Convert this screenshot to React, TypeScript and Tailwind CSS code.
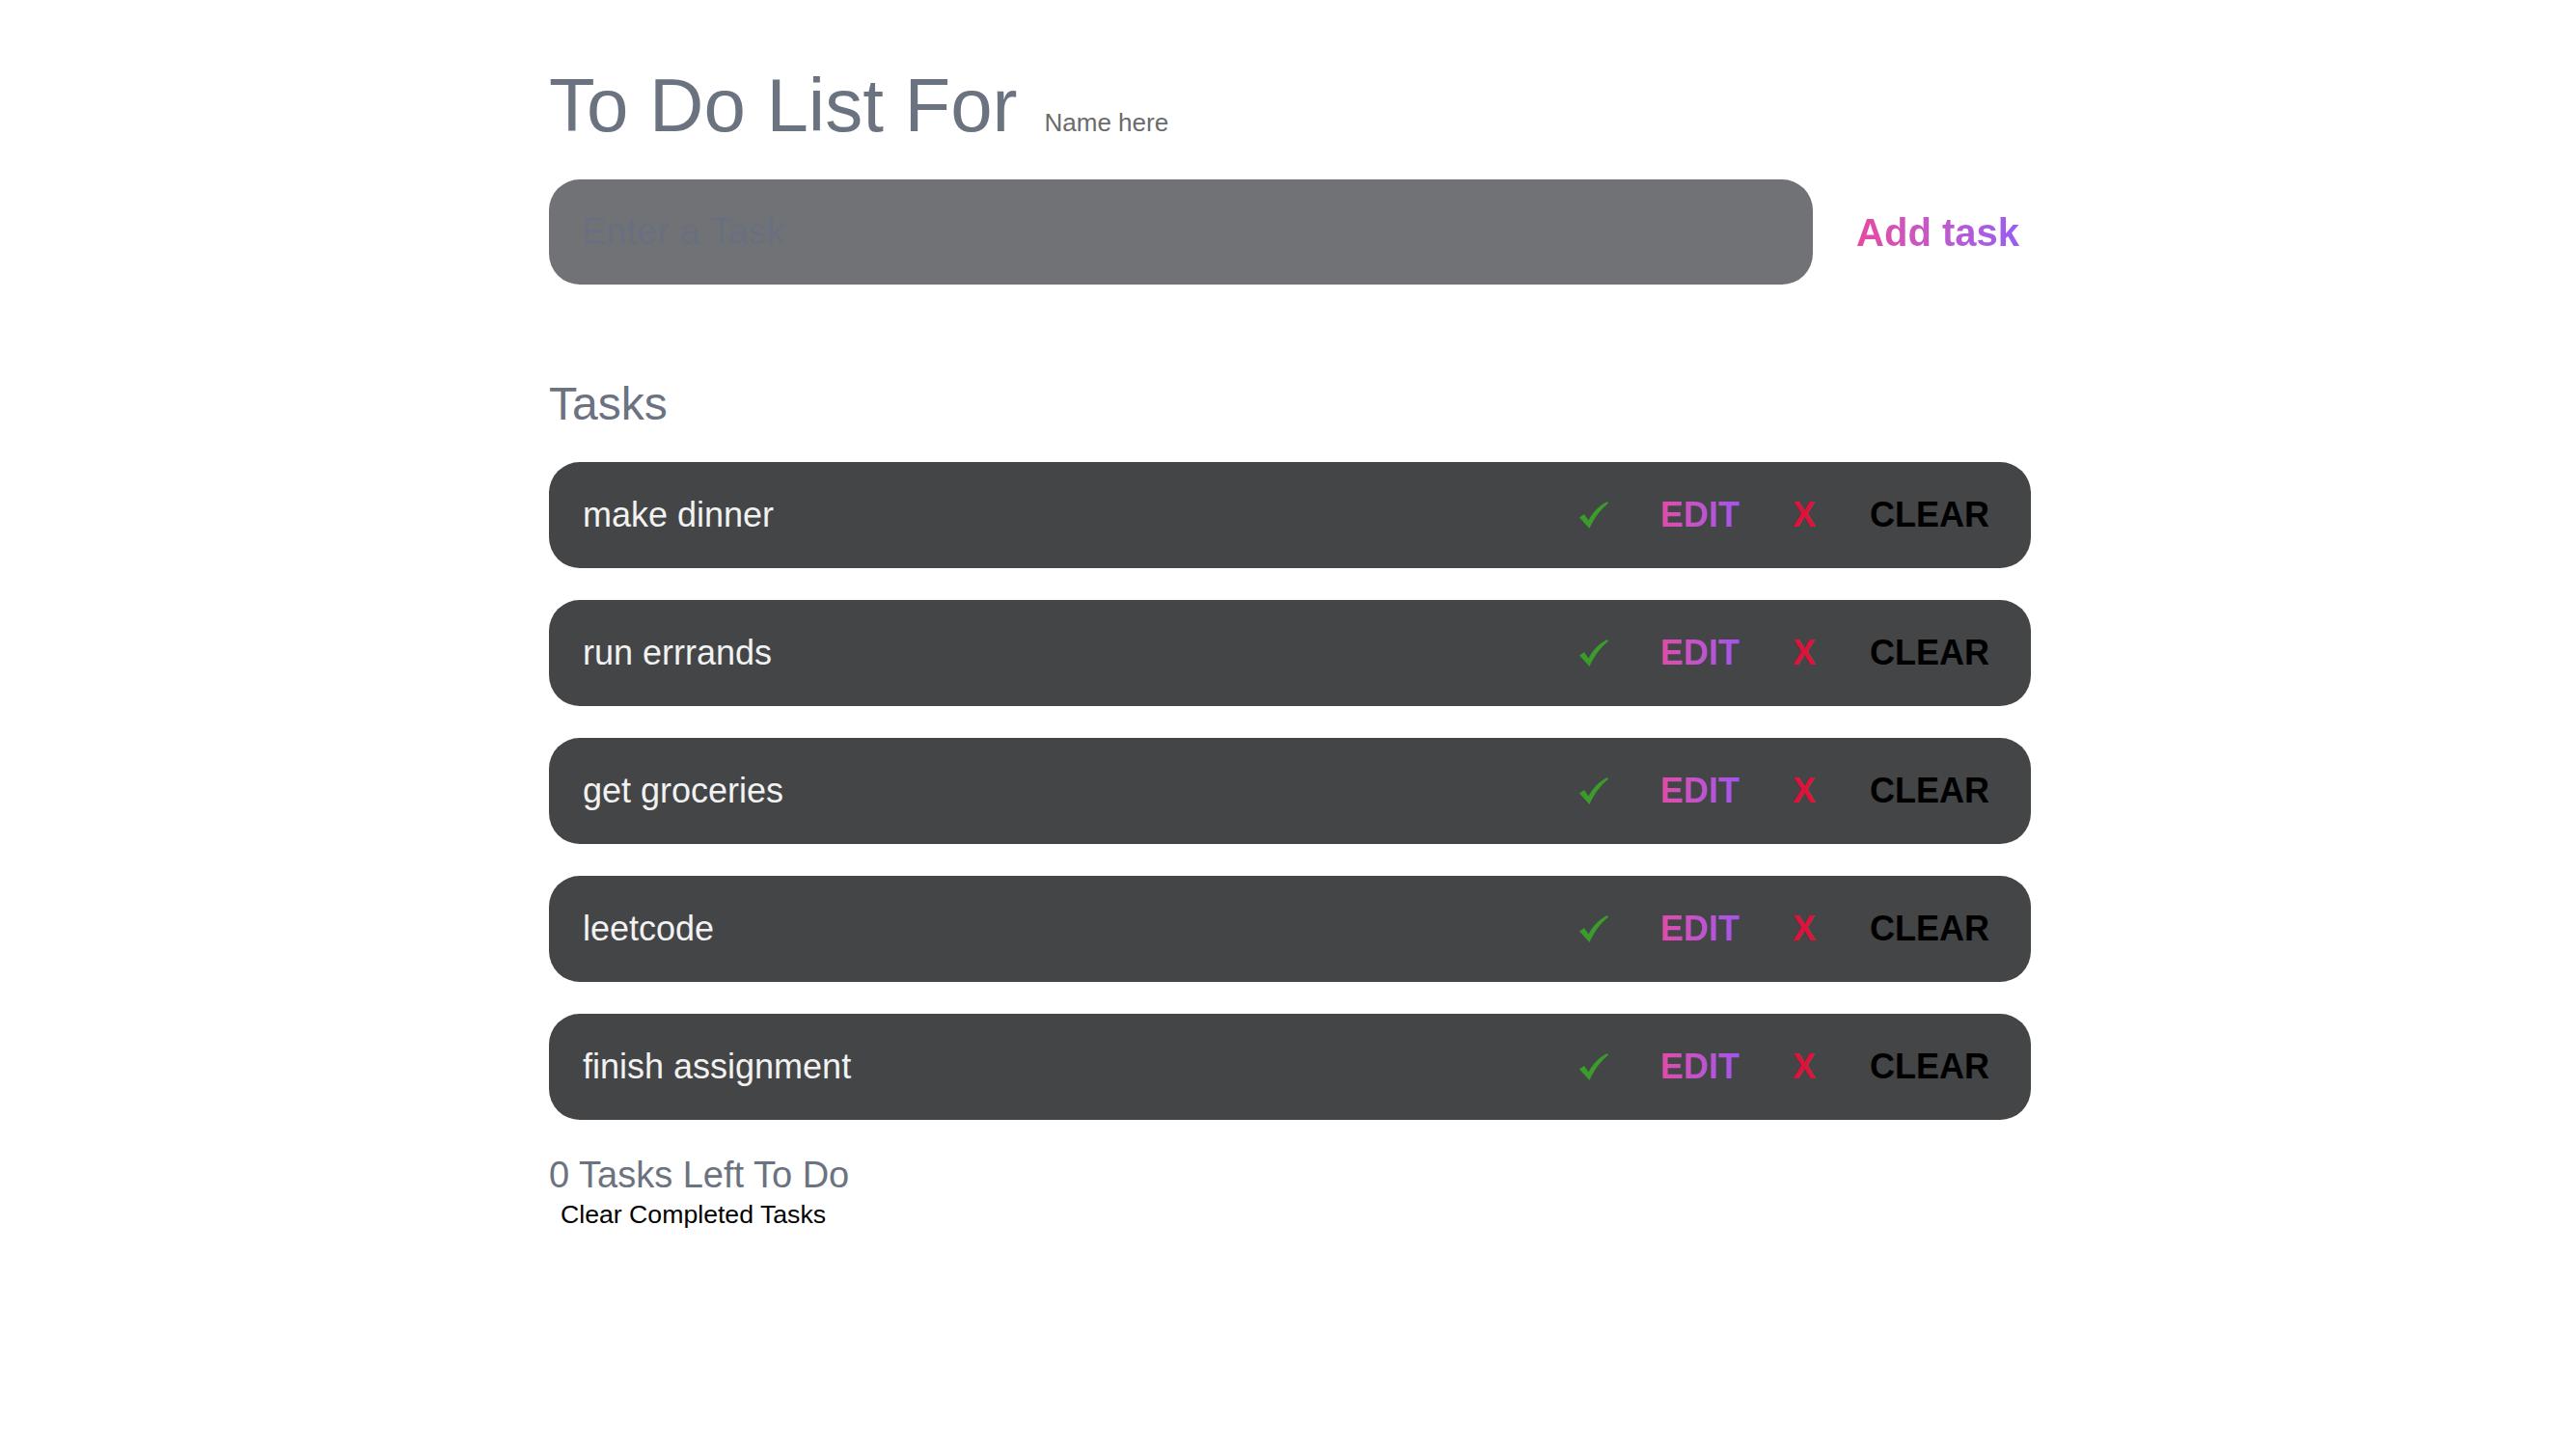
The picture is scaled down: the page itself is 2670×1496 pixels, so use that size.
import React from "react";

const tasks = ["make dinner", "run errrands", "get groceries", "leetcode", "finish assignment"];

function Check() {
  return (
    <svg width="30" height="28" viewBox="0 0 30 28" aria-hidden="true">
      <path d="M0 16.5 L5 13 L9.5 19.5 C13.5 11.5 20 4.5 29 0 L30 1.8 C22.5 8 15.5 16.5 10.5 28 Z" fill="#3b9b2b" />
    </svg>
  );
}

export default function App() {
  return (
    <div className="min-h-screen bg-white font-['Liberation_Sans',Arial,sans-serif]">
      <div className="w-[1540px] mx-auto pl-[4px] pt-[69px]">
        <div className="flex items-baseline h-[80px]">
          <h1 className="text-[78px] leading-[80px] font-normal text-[#6b7280]">To Do List For</h1>
          <span className="ml-[28px] text-[26px] leading-[30px] text-[#6b6b6b]">Name here</span>
        </div>

        <div className="mt-[37px] flex items-center">
          <input
            placeholder="Enter a Task"
            className="flex-1 min-w-0 h-[109px] rounded-[32px] bg-[#717276] px-[34px] text-[38px] text-white placeholder:text-[#687080] outline-none"
          />
          <button className="ml-[45px] mr-[12px] text-[40px] leading-[48px] font-bold bg-linear-to-r from-[#e8479f] to-[#995cf3] bg-clip-text text-transparent">
            Add task
          </button>
        </div>

        <h2 className="mt-[96px] text-[48px] leading-[56px] font-normal text-[#6b7280]">Tasks</h2>

        <div className="mt-[32px] flex flex-col gap-[33px]">
          {tasks.map((t) => (
            <div
              key={t}
              className="h-[110px] rounded-[32px] bg-[#444547] flex items-center justify-between pl-[35px] pr-[43px]"
            >
              <span className="text-[36px] leading-[40px] text-[#f2f2f2]">{t}</span>
              <div className="flex items-center">
                <Check />
                <button className="ml-[54px] text-[36px] leading-[40px] font-bold bg-linear-to-r from-[#e04aa8] to-[#a154ec] bg-clip-text text-transparent">
                  EDIT
                </button>
                <button className="ml-[55px] text-[36px] leading-[40px] font-bold text-[#dc143c]">X</button>
                <button className="ml-[56px] text-[36px] leading-[40px] font-bold text-black">CLEAR</button>
              </div>
            </div>
          ))}
        </div>

        <p className="mt-[37px] text-[38px] leading-[40px] text-[#6b7280]">0 Tasks Left To Do</p>
        <button className="mt-[6px] block px-[12px] text-[26.67px] leading-[30px] text-black">
          Clear Completed Tasks
        </button>
      </div>
    </div>
  );
}
